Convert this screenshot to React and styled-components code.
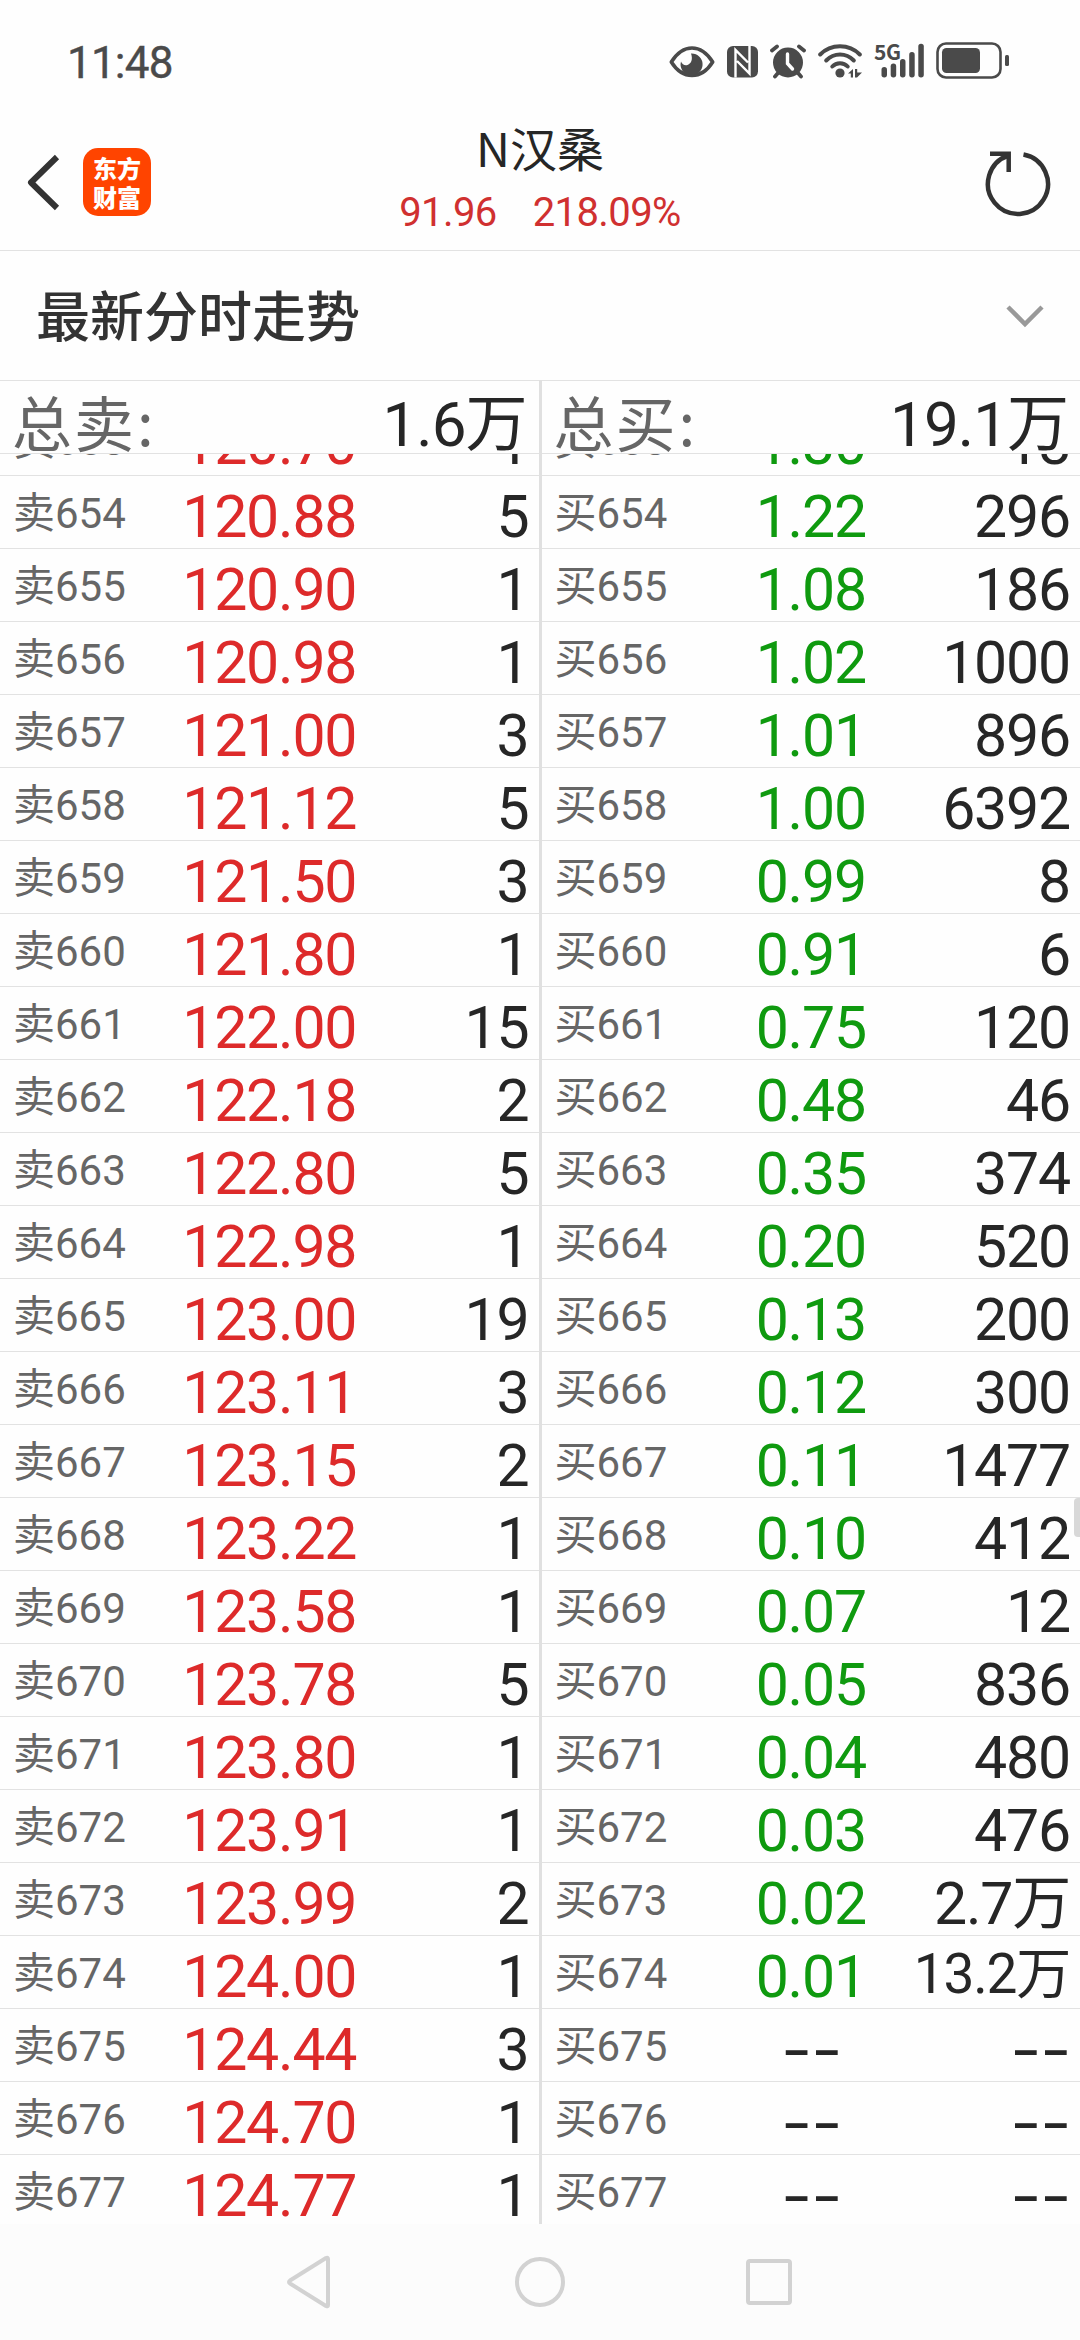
import React from "react";
import styled, { createGlobalStyle } from "styled-components";

const sells = [
  ["120.70", "1"],
  ["120.88", "5"],
  ["120.90", "1"],
  ["120.98", "1"],
  ["121.00", "3"],
  ["121.12", "5"],
  ["121.50", "3"],
  ["121.80", "1"],
  ["122.00", "15"],
  ["122.18", "2"],
  ["122.80", "5"],
  ["122.98", "1"],
  ["123.00", "19"],
  ["123.11", "3"],
  ["123.15", "2"],
  ["123.22", "1"],
  ["123.58", "1"],
  ["123.78", "5"],
  ["123.80", "1"],
  ["123.91", "1"],
  ["123.99", "2"],
  ["124.00", "1"],
  ["124.44", "3"],
  ["124.70", "1"],
  ["124.77", "1"],
];

const buys = [
  ["1.30", "18"],
  ["1.22", "296"],
  ["1.08", "186"],
  ["1.02", "1000"],
  ["1.01", "896"],
  ["1.00", "6392"],
  ["0.99", "8"],
  ["0.91", "6"],
  ["0.75", "120"],
  ["0.48", "46"],
  ["0.35", "374"],
  ["0.20", "520"],
  ["0.13", "200"],
  ["0.12", "300"],
  ["0.11", "1477"],
  ["0.10", "412"],
  ["0.07", "12"],
  ["0.05", "836"],
  ["0.04", "480"],
  ["0.03", "476"],
  ["0.02", "2.7万"],
  ["0.01", "13.2万"],
  ["--", "--"],
  ["--", "--"],
  ["--", "--"],
];

const FIRST_LEVEL = 653;

const Amount = ({ value, origin }) =>
  value === "--" ? <Dashes $origin={origin}>--</Dashes> : value;

const Side = ({ name, total, rows, color }) => (
  <Column>
    <Total>
      <TotalName>
        总{name}
        <Colon>:</Colon>
      </TotalName>
      <TotalValue>{total}</TotalValue>
    </Total>
    <List>
      <Rows>
        {rows.map(([price, qty], i) => (
          <Row key={i}>
            <Level>
              {name}
              {FIRST_LEVEL + i}
            </Level>
            <Price $color={price === "--" ? "#262626" : color}>
              <Amount value={price} origin="center" />
            </Price>
            <Quantity $small={qty.length > 4}>
              <Amount value={qty} origin="right" />
            </Quantity>
          </Row>
        ))}
      </Rows>
    </List>
  </Column>
);

const StatusIcons = () => (
  <Icons>
    <svg width="46" height="38" viewBox="0 0 46 38">
      <path
        d="M2.300 21C8 12 15 7 23 7s15 5 20.700 14C38 30 31 34.500 23 34.500S8 30 2.300 21z"
        fill="none"
        stroke="#4a4a4a"
        strokeWidth="3.600"
        strokeLinejoin="round"
      />
      <path
        d="M22 12.500a11 11 0 1 1-10 8c1 3 4 4.500 6.500 3.500 4-1.500 5.500-6 3.500-11.500z"
        fill="#4a4a4a"
      />
    </svg>
    <svg width="31" height="38" viewBox="0 0 31 38">
      <rect x="0" y="5" width="31" height="31.500" rx="6" fill="#4a4a4a" />
      <path
        d="M8.500 36.500V9L21 21.500M22.500 5V32.500L10 20"
        fill="none"
        stroke="#fff"
        strokeWidth="2.400"
      />
    </svg>
    <svg width="36" height="38" viewBox="0 0 36 38">
      <circle cx="18" cy="21.500" r="15" fill="#4a4a4a" />
      <path
        d="M2 9.500L7 5.500M34 9.500L29 5.500M8 32L5 35.500M28 32L31 35.500"
        stroke="#4a4a4a"
        strokeWidth="3.800"
        strokeLinecap="round"
      />
      <path
        d="M17.500 13v9.500l5 5.500"
        fill="none"
        stroke="#fff"
        strokeWidth="3.400"
        strokeLinecap="round"
      />
    </svg>
    <svg width="44" height="38" viewBox="0 0 44 38">
      <g fill="none" stroke="#4a4a4a" strokeWidth="4" strokeLinecap="round">
        <path d="M2.200 13.500C13 2.500 31 2.500 41.800 13.500" />
        <path d="M8.200 19.500C16 11.500 28 11.500 35.800 19.500" />
        <path d="M14.300 25.500C18.500 21 25.500 21 29.700 25.500" />
      </g>
      <circle cx="22" cy="32" r="4.600" fill="#4a4a4a" />
      <path d="M30 32.500l5-4.500v8.500h-2.200v-4zM37 28h2.200v3.500H44l-5 5h-2z" fill="#4a4a4a" />
    </svg>
    <Signal>
      <SignalText>5G</SignalText>
      <svg width="50" height="38" viewBox="0 0 50 38">
        <g fill="#4a4a4a">
          <rect x="7.500" y="26" width="5.500" height="10.500" rx="2.700" />
          <rect x="16.700" y="22.500" width="5.500" height="14" rx="2.700" />
          <rect x="26" y="18" width="5.500" height="18.500" rx="2.700" />
          <rect x="35.200" y="11" width="5.500" height="25.500" rx="2.700" />
          <rect x="44.300" y="2.700" width="5.500" height="33.800" rx="2.700" />
        </g>
      </svg>
    </Signal>
    <svg width="73" height="38" viewBox="0 0 73 38">
      <rect
        x="1.500"
        y="2.500"
        width="63"
        height="34"
        rx="8.500"
        fill="none"
        stroke="#4a4a4a"
        strokeWidth="2.600"
      />
      <rect x="6" y="7" width="38" height="25" rx="4.500" fill="#4a4a4a" />
      <rect x="69" y="14" width="4" height="11" rx="1.500" fill="#4a4a4a" />
    </svg>
  </Icons>
);

export default function App() {
  return (
    <Screen>
      <GlobalStyle />
      <StatusBar>
        <Clock>11:48</Clock>
        <StatusIcons />
      </StatusBar>

      <Header>
        <HeaderSide>
          <svg width="34" height="60" viewBox="0 0 34 60">
            <path
              d="M31 5L5 30.500L31 56"
              fill="none"
              stroke="#333"
              strokeWidth="6"
              strokeLinejoin="round"
            />
          </svg>
          <Logo>
            <span>东方</span>
            <span>财富</span>
          </Logo>
        </HeaderSide>
        <Stock>
          <StockName>N汉桑</StockName>
          <Quote>
            <span>91.96</span>
            <span>218.09%</span>
          </Quote>
        </Stock>
        <HeaderSide $end>
          <svg width="66" height="70" viewBox="0 0 66 70">
            <path
              d="M38.500 7.500A30 30 0 1 1 23.500 8.500"
              fill="none"
              stroke="#333"
              strokeWidth="4.500"
            />
            <path d="M5 6.700h18.700v18.300" fill="none" stroke="#333" strokeWidth="4.500" />
          </svg>
        </HeaderSide>
      </Header>

      <Trend>
        <TrendTitle>最新分时走势</TrendTitle>
        <svg width="38" height="24" viewBox="0 0 38 24">
          <path d="M2 3l17 17L36 3" fill="none" stroke="#999" strokeWidth="4.500" />
        </svg>
      </Trend>

      <Book>
        <Side name="卖" total="1.6万" rows={sells} color="#dd2a2a" />
        <Divider />
        <Side name="买" total="19.1万" rows={buys} color="#0f9a0f" />
        <ScrollThumb />
      </Book>

      <NavBar>
        <svg width="52" height="56" viewBox="0 0 52 56">
          <path
            d="M43 5v46q0 2-2 1L5 29.500q-2-1.500 0-3L41 4q2-1 2 1z"
            fill="none"
            stroke="#d2d2d2"
            strokeWidth="4"
            strokeLinejoin="round"
          />
        </svg>
        <svg width="52" height="56" viewBox="0 0 52 56">
          <circle cx="26" cy="28" r="23" fill="none" stroke="#d2d2d2" strokeWidth="4" />
        </svg>
        <svg width="52" height="56" viewBox="0 0 52 56">
          <rect
            x="5"
            y="7"
            width="42"
            height="42"
            rx="2"
            fill="none"
            stroke="#d2d2d2"
            strokeWidth="4"
          />
        </svg>
      </NavBar>
    </Screen>
  );
}

const GlobalStyle = createGlobalStyle`
  body {
    margin: 0;
    background: #fefefe;
  }
`;

const Screen = styled.div`
  width: 1080px;
  height: 2340px;
  display: flex;
  flex-direction: column;
  overflow: hidden;
  background: #fefefe;
  color: #262626;
  font-family: Roboto, "Noto Sans CJK SC", sans-serif;

  svg {
    display: block;
    flex: none;
  }
`;

const Dashes = styled.span`
  display: inline-block;
  font-family: Inter, sans-serif;
  letter-spacing: -1px;
  transform: scaleX(1.15);
  transform-origin: ${(p) => p.$origin} center;
`;

const StatusBar = styled.div`
  height: 116px;
  display: flex;
  justify-content: space-between;
  align-items: flex-start;
  padding: 0 71px 0 67px;
  box-sizing: border-box;
`;

const Clock = styled.div`
  margin-top: 37px;
  font-size: 44px;
  line-height: 52px;
  letter-spacing: -0.8px;
  color: #4a4a4a;
  -webkit-text-stroke: 0.4px #4a4a4a;
`;

const Icons = styled.div`
  display: flex;
  gap: 12px;
  margin-top: 41px;
`;

const Signal = styled.div`
  position: relative;
`;

const SignalText = styled.span`
  position: absolute;
  left: 0;
  top: 0;
  font-family: "Noto Sans CJK SC", sans-serif;
  font-size: 21px;
  line-height: 21px;
  font-weight: 700;
  letter-spacing: -0.5px;
  color: #4a4a4a;
`;

const Header = styled.div`
  height: 135px;
  box-sizing: border-box;
  display: grid;
  grid-template-columns: 1fr auto 1fr;
  border-bottom: 1px solid #e2e2e2;
`;

const HeaderSide = styled.div`
  display: flex;
  align-items: center;
  justify-content: ${(p) => (p.$end ? "flex-end" : "flex-start")};
  gap: 23px;
  padding: 0 29px 2px 26px;
`;

const Logo = styled.div`
  width: 68px;
  height: 68px;
  border-radius: 15px;
  background: #ff4400;
  color: #fff;
  display: flex;
  flex-direction: column;
  justify-content: center;
  align-items: center;
  font-family: "Noto Sans CJK SC", sans-serif;
  font-size: 24px;
  line-height: 29px;
  font-weight: 900;
`;

const Stock = styled.div`
  display: flex;
  flex-direction: column;
  align-items: center;
`;

const StockName = styled.div`
  font-family: "Noto Sans CJK SC", sans-serif;
  font-size: 47px;
  line-height: 62px;
`;

const Quote = styled.div`
  display: flex;
  gap: 36px;
  margin-top: 10px;
  font-size: 40px;
  line-height: 50px;
  letter-spacing: -0.6px;
  color: #d03030;
`;

const Trend = styled.div`
  height: 129px;
  display: flex;
  align-items: center;
  justify-content: space-between;
  padding: 0 36px;
`;

const TrendTitle = styled.div`
  margin-bottom: 3px;
  font-family: "Noto Sans CJK SC", sans-serif;
  font-size: 54px;
  line-height: 80px;
  font-weight: 500;
  color: #333;
`;

const Book = styled.div`
  position: relative;
  height: 1844px;
  display: flex;
`;

const Divider = styled.div`
  width: 3px;
  background: #e0e0e0;
`;

const Column = styled.div`
  flex: 1;
  min-width: 0;
  display: flex;
  flex-direction: column;
`;

const Total = styled.div`
  height: 74px;
  box-sizing: border-box;
  display: flex;
  justify-content: space-between;
  border-top: 1px solid #e2e2e2;
  border-bottom: 1px solid #e2e2e2;
  padding: 0 12px;
`;

const TotalName = styled.div`
  display: flex;
  font-family: "Noto Sans CJK SC", sans-serif;
  font-size: 60px;
  line-height: 80px;
  letter-spacing: 2px;
  color: #666;
`;

const Colon = styled.span`
  margin: -1px 0 0 1px;
`;

const TotalValue = styled.div`
  font-size: 62px;
  line-height: 88px;
  letter-spacing: -1px;
`;

const List = styled.div`
  flex: 1;
  overflow: hidden;
`;

// the list is scrolled, so the first row is mostly under the totals
const Rows = styled.div`
  margin-top: -51px;
`;

const Row = styled.div`
  height: 73px;
  box-sizing: border-box;
  display: grid;
  grid-template-columns: 1fr auto 1fr;
  border-bottom: 1px solid #e2e2e2;
`;

const Level = styled.div`
  padding-left: 13px;
  white-space: nowrap;
  font-size: 42px;
  line-height: 75px;
  color: #666;
`;

const Price = styled.div`
  font-size: 59px;
  line-height: 82px;
  letter-spacing: -1.2px;
  color: ${(p) => p.$color};
`;

const Quantity = styled.div`
  justify-self: end;
  padding-right: 10px;
  white-space: nowrap;
  font-size: ${(p) => (p.$small ? 55 : 59)}px;
  line-height: ${(p) => (p.$small ? 77 : 82)}px;
  letter-spacing: -1.2px;
`;

const ScrollThumb = styled.div`
  position: absolute;
  right: 0;
  top: 1118px;
  width: 6px;
  height: 39px;
  border-radius: 4px 0 0 4px;
  background: #d8d8d8;
`;

const NavBar = styled.div`
  height: 116px;
  display: flex;
  justify-content: center;
  align-items: center;
  gap: 177px;
  background: #fcfcfc;
`;
